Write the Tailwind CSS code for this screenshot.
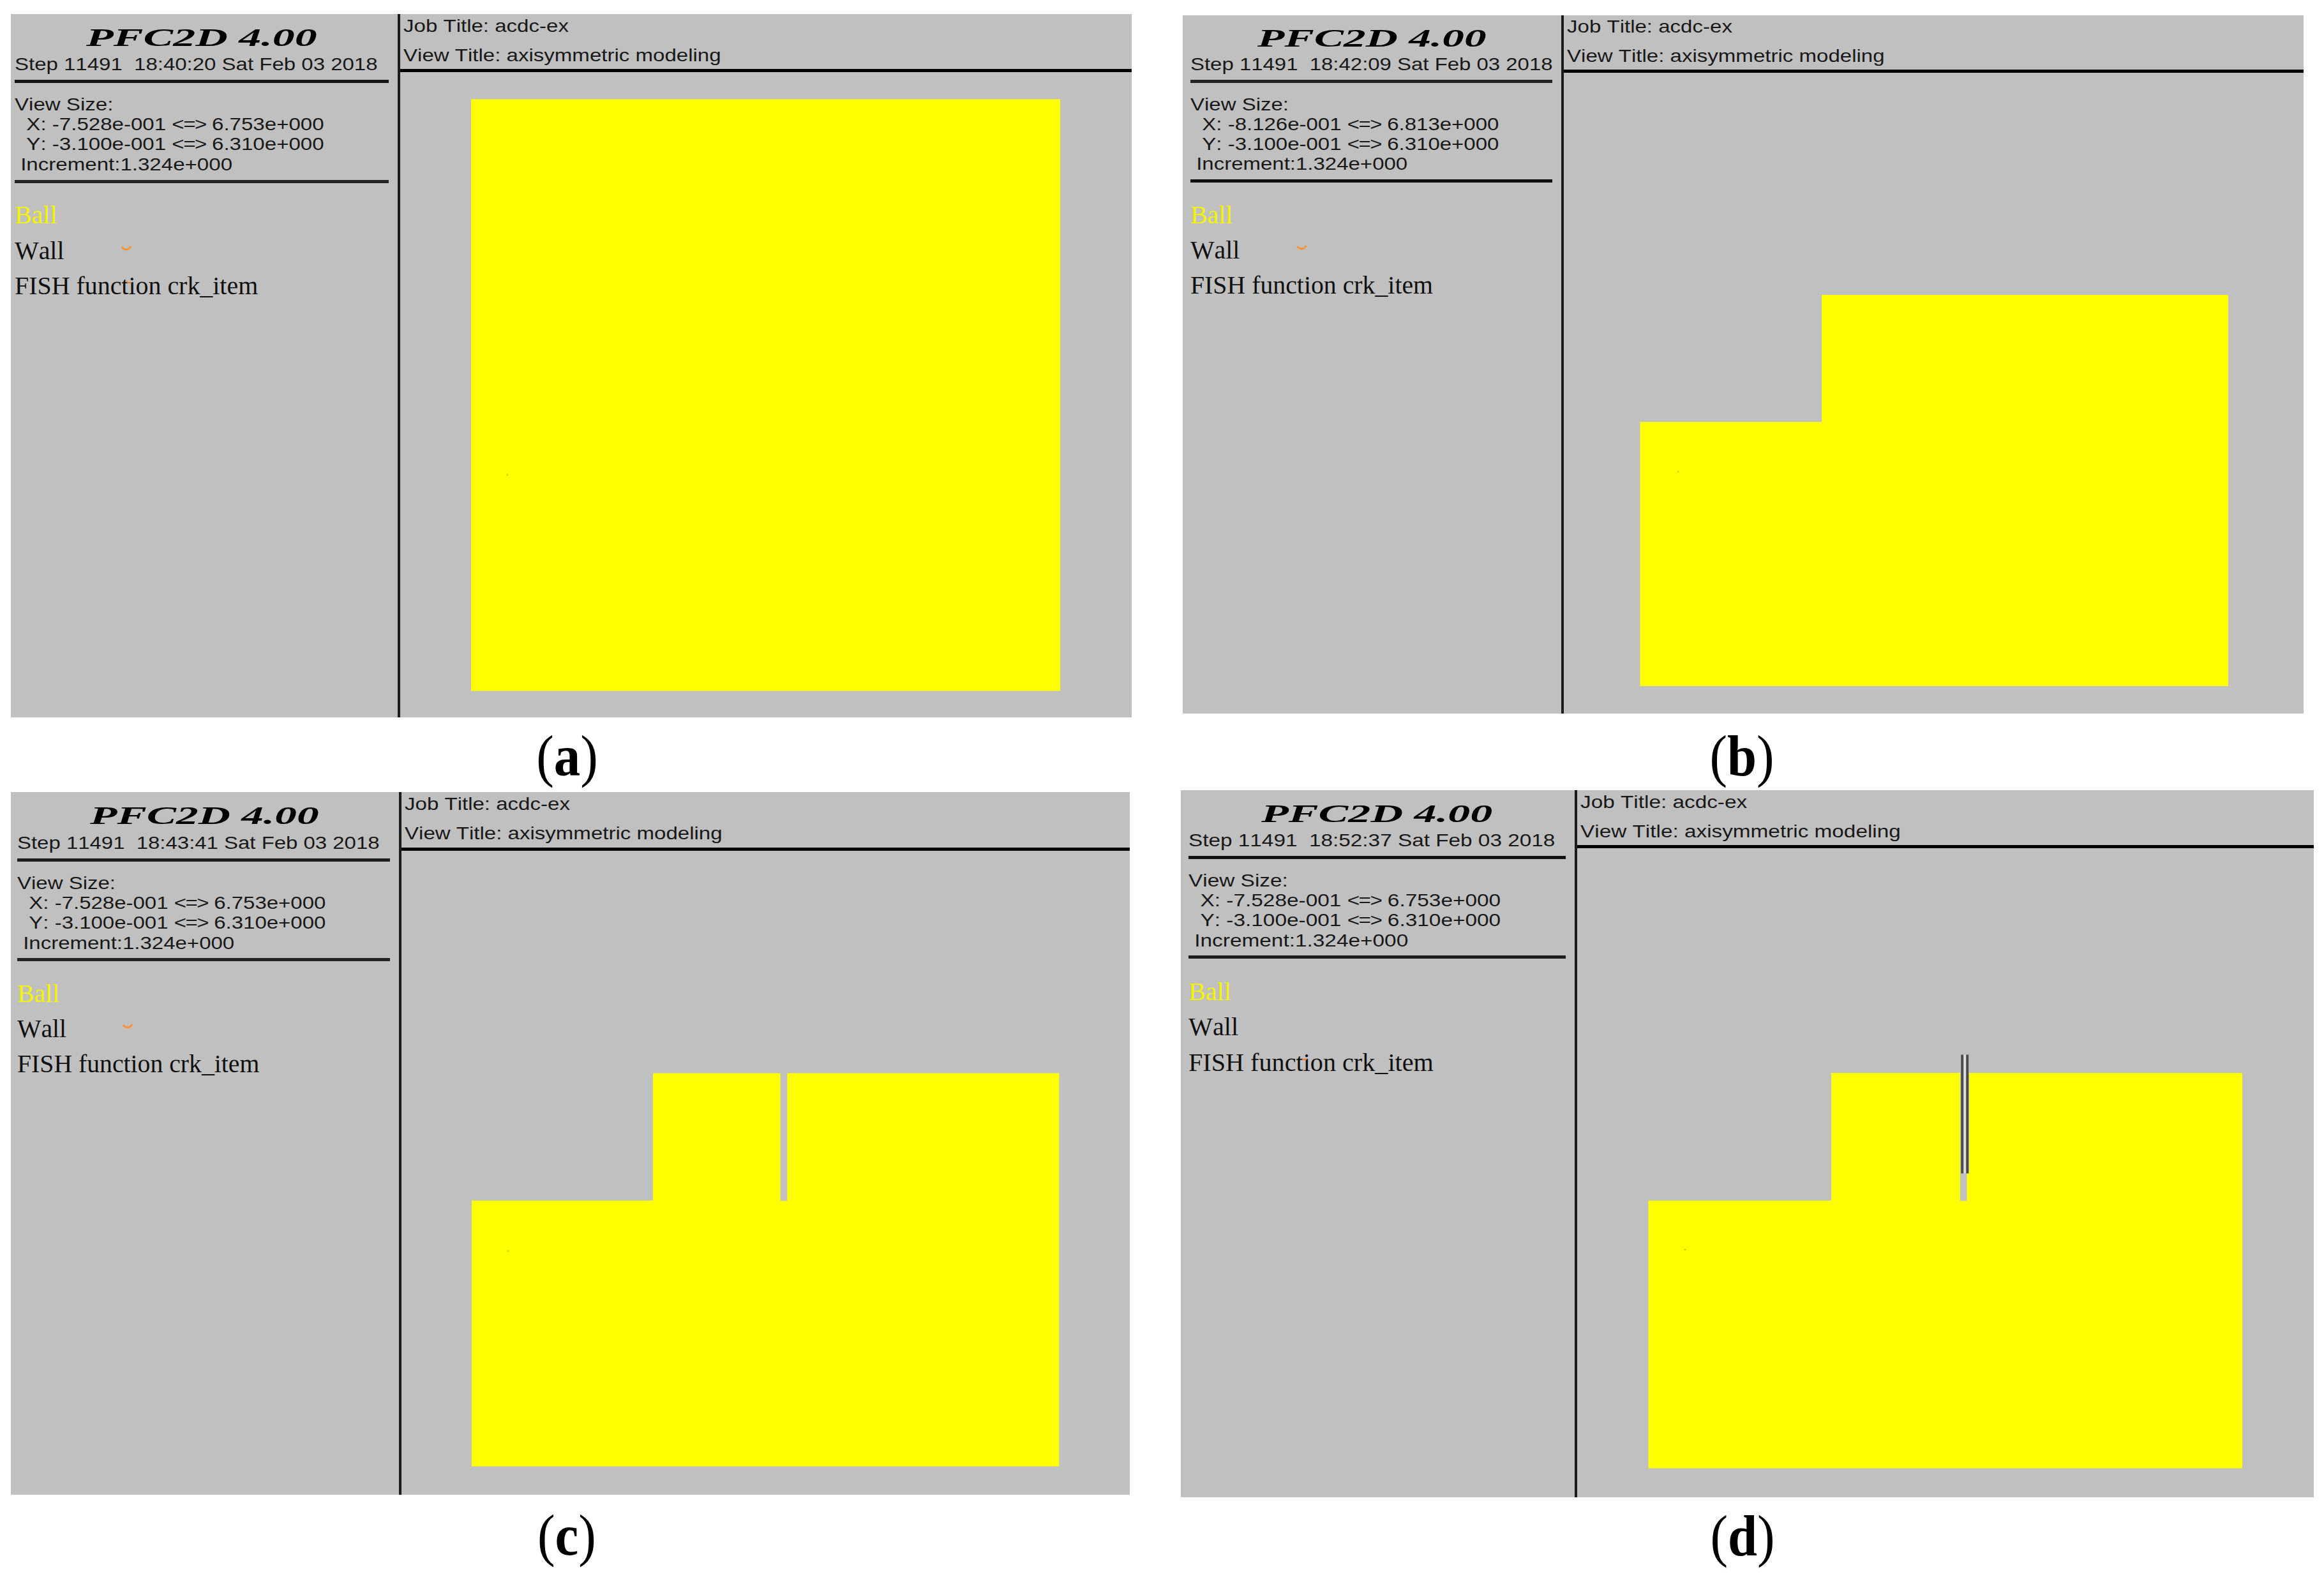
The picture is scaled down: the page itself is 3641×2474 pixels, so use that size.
<!DOCTYPE html>
<html lang="en">
<head>
    <meta charset="UTF-8">
    <meta name="viewport" content="width=device-width, initial-scale=1.0">
    <title>PFC2D 4.00 - axisymmetric modeling</title>
    <script src="https://cdn.jsdelivr.net/npm/@tailwindcss/browser@4"></script>
</head>
<body class="bg-white w-[3641px] h-[2474px] overflow-hidden flex gap-[77px] pl-[17px] text-[#181818] font-['Liberation_Sans',sans-serif] text-[28px] [font-kerning:none]">

<!-- left column -->
<div class="w-[1756px] flex-none">

    <!-- (a) -->
    <section class="mt-[22px] w-[1756px] h-[1102px] flex bg-[#c0c0c0]">
        <aside class="w-[610px] flex-none border-r-4 border-[#1c1c1c] pl-[6px] pt-[15px]">
            <h1 class="ml-[112px] w-max origin-left scale-x-[1.75] font-['Liberation_Serif',serif] font-bold italic text-[40px] leading-[44px] text-black">PFC2D 4.00</h1>
            <p class="mt-[4px] w-max origin-left scale-x-[1.178] leading-[32px] whitespace-pre">Step 11491  18:40:20 Sat Feb 03 2018</p>
            <div class="mt-[8px] w-[586px] h-[5px] bg-[#141414]"></div>
            <div class="mt-[18px] w-max origin-left scale-x-[1.181] leading-[31.2px]">
                <p>View Size:</p>
                <p class="whitespace-pre">  X: -7.528e-001 <span class="tracking-[-0.045em]">&lt;=&gt;</span> 6.753e+000</p>
                <p class="whitespace-pre">  Y: -3.100e-001 <span class="tracking-[-0.045em]">&lt;=&gt;</span> 6.310e+000</p>
                <p class="whitespace-pre"> Increment:1.324e+000</p>
            </div>
            <div class="mt-[9px] w-[586px] h-[5px] bg-[#242424]"></div>
            <div class="mt-[22px] w-max origin-left scale-x-[1.023] font-['Liberation_Serif',serif] text-[39px] leading-[55.7px] text-[#101010]">
                <p class="text-[#f4f400]">Ball</p>
                <p class="relative">Wall<svg class="absolute left-[163px] top-[20px] w-[16px] h-[8px]" viewBox="0 0 16 8" fill="none" stroke="#ff9238" stroke-width="3"><path d="M1 2 Q4 6 8 6 Q12 6 15 1"/></svg></p>
                <p class="relative">FISH function crk_item<svg class="absolute left-[170px] top-[20px] w-[10px] h-[5px]" viewBox="0 0 10 5" fill="none" stroke="#f08030" stroke-width="2"><path d="M1 1 Q5 5 9 2"/></svg></p>
            </div>
        </aside>
        <main class="flex-1 flex flex-col">
            <header class="h-[91px] border-b-5 border-black pl-[5px]">
                <p class="w-max origin-left scale-x-[1.18] leading-[37px]">Job Title: acdc-ex</p>
                <p class="mt-[9px] w-max origin-left scale-x-[1.18] leading-[37px]">View Title: axisymmetric modeling</p>
            </header>
            <svg class="w-[1146px] h-[1011px]" viewBox="627 113 1146 1011">
                <path d="M738 155.5H1661V1082.5H738Z" fill="#ffff00"/>
                <circle cx="795" cy="744" r="1.5" fill="#d2d200"/>
            </svg>
        </main>
    </section>
    <p class="w-[1742px] h-[117px] pt-[2px] leading-[117px] text-center font-['Liberation_Serif',serif] text-[90px] text-black"><span class="inline-block scale-x-[0.92]">(<b>a</b>)</span></p>

    <!-- (c) -->
    <section class="w-[1753px] h-[1101px] flex bg-[#c0c0c0]">
        <aside class="w-[612px] flex-none border-r-4 border-[#1c1c1c] pl-[10px] pt-[15px]">
            <h1 class="ml-[114px] w-max origin-left scale-x-[1.735] font-['Liberation_Serif',serif] font-bold italic text-[40px] leading-[44px] text-black">PFC2D 4.00</h1>
            <p class="mt-[5px] w-max origin-left scale-x-[1.176] leading-[32px] whitespace-pre">Step 11491  18:43:41 Sat Feb 03 2018</p>
            <div class="mt-[8px] w-[584px] h-[5px] bg-[#1e1e1e]"></div>
            <div class="mt-[18px] w-max origin-left scale-x-[1.178] leading-[31.2px]">
                <p>View Size:</p>
                <p class="whitespace-pre">  X: -7.528e-001 <span class="tracking-[-0.045em]">&lt;=&gt;</span> 6.753e+000</p>
                <p class="whitespace-pre">  Y: -3.100e-001 <span class="tracking-[-0.045em]">&lt;=&gt;</span> 6.310e+000</p>
                <p class="whitespace-pre"> Increment:1.324e+000</p>
            </div>
            <div class="mt-[8px] w-[584px] h-[5px] bg-[#242424]"></div>
            <div class="mt-[23px] w-max origin-left scale-x-[1.018] font-['Liberation_Serif',serif] text-[39px] leading-[55px] text-[#101010]">
                <p class="text-[#f4f400]">Ball</p>
                <p class="relative">Wall<svg class="absolute left-[162px] top-[20px] w-[16px] h-[8px]" viewBox="0 0 16 8" fill="none" stroke="#ff9238" stroke-width="3"><path d="M1 2 Q4 6 8 6 Q12 6 15 1"/></svg></p>
                <p>FISH function crk_item</p>
            </div>
        </aside>
        <main class="flex-1 flex flex-col">
            <header class="h-[92px] border-b-5 border-black pl-[5px]">
                <p class="w-max origin-left scale-x-[1.18] leading-[37px]">Job Title: acdc-ex</p>
                <p class="mt-[9px] w-max origin-left scale-x-[1.18] leading-[37px]">View Title: axisymmetric modeling</p>
            </header>
            <svg class="w-[1141px] h-[1009px]" viewBox="629 1333 1141 1009">
                <!-- stepped block with an open slot -->
                <path d="M739 1881H1023V1681.5H1222.7V1881.5H1233.3V1681.5H1659.3V2297.5H739Z" fill="#ffff00"/>
                <circle cx="796" cy="1960" r="1.5" fill="#d2d200"/>
            </svg>
        </main>
    </section>
    <p class="w-[1742px] h-[124px] pt-[4px] leading-[120px] text-center font-['Liberation_Serif',serif] text-[90px] text-black"><span class="inline-block scale-x-[0.92]">(<b>c</b>)</span></p>
</div>

<!-- right column -->
<div class="w-[1775px] flex-none">

    <!-- (b) -->
    <section class="mt-[24px] ml-[3px] w-[1756px] h-[1094px] flex bg-[#c0c0c0]">
        <aside class="w-[597px] flex-none border-r-4 border-[#1c1c1c] pl-[12px] pt-[14px]">
            <h1 class="ml-[105px] w-max origin-left scale-x-[1.735] font-['Liberation_Serif',serif] font-bold italic text-[40px] leading-[44px] text-black">PFC2D 4.00</h1>
            <p class="mt-[3px] w-max origin-left scale-x-[1.176] leading-[32px] whitespace-pre">Step 11491  18:42:09 Sat Feb 03 2018</p>
            <div class="mt-[8px] w-[567px] h-[5px] bg-[#242424]"></div>
            <div class="mt-[18px] w-max origin-left scale-x-[1.178] leading-[31.1px]">
                <p>View Size:</p>
                <p class="whitespace-pre">  X: -8.126e-001 <span class="tracking-[-0.045em]">&lt;=&gt;</span> 6.813e+000</p>
                <p class="whitespace-pre">  Y: -3.100e-001 <span class="tracking-[-0.045em]">&lt;=&gt;</span> 6.310e+000</p>
                <p class="whitespace-pre"> Increment:1.324e+000</p>
            </div>
            <div class="mt-[8.6px] w-[567px] h-[5px] bg-[#101010]"></div>
            <div class="mt-[23px] w-max origin-left scale-x-[1.02] font-['Liberation_Serif',serif] text-[39px] leading-[55px] text-[#101010]">
                <p class="text-[#f4f400]">Ball</p>
                <p class="relative">Wall<svg class="absolute left-[163px] top-[20px] w-[16px] h-[8px]" viewBox="0 0 16 8" fill="none" stroke="#ff9238" stroke-width="3"><path d="M1 2 Q4 6 8 6 Q12 6 15 1"/></svg></p>
                <p>FISH function crk_item</p>
            </div>
        </aside>
        <main class="flex-1 flex flex-col">
            <header class="h-[90px] border-b-5 border-black pl-[5px]">
                <p class="w-max origin-left scale-x-[1.18] leading-[36px]">Job Title: acdc-ex</p>
                <p class="mt-[10px] w-max origin-left scale-x-[1.18] leading-[36px]">View Title: axisymmetric modeling</p>
            </header>
            <svg class="w-[1159px] h-[1004px]" viewBox="2450 114 1159 1004">
                <path d="M2569.5 661H2854V462H3491V1075H2569.5Z" fill="#ffff00"/>
                <circle cx="2629" cy="739" r="1.5" fill="#d2d200"/>
            </svg>
        </main>
    </section>
    <p class="w-[1759px] h-[120px] pt-[8px] leading-[117px] text-center font-['Liberation_Serif',serif] text-[90px] text-black"><span class="inline-block scale-x-[0.92]">(<b>b</b>)</span></p>

    <!-- (d) -->
    <section class="w-[1775px] h-[1108px] flex bg-[#c0c0c0]">
        <aside class="w-[621px] flex-none border-r-4 border-[#1c1c1c] pl-[12px] pt-[15px]">
            <h1 class="ml-[114px] w-max origin-left scale-x-[1.753] font-['Liberation_Serif',serif] font-bold italic text-[40px] leading-[44px] text-black">PFC2D 4.00</h1>
            <p class="mt-[4px] w-max origin-left scale-x-[1.19] leading-[32px] whitespace-pre">Step 11491  18:52:37 Sat Feb 03 2018</p>
            <div class="mt-[8px] w-[591px] h-[5px] bg-[#101010]"></div>
            <div class="mt-[18px] w-max origin-left scale-x-[1.192] leading-[31.2px]">
                <p>View Size:</p>
                <p class="whitespace-pre">  X: -7.528e-001 <span class="tracking-[-0.045em]">&lt;=&gt;</span> 6.753e+000</p>
                <p class="whitespace-pre">  Y: -3.100e-001 <span class="tracking-[-0.045em]">&lt;=&gt;</span> 6.310e+000</p>
                <p class="whitespace-pre"> Increment:1.324e+000</p>
            </div>
            <div class="mt-[8.2px] w-[591px] h-[5px] bg-[#1e1e1e]"></div>
            <div class="mt-[24px] w-max origin-left scale-x-[1.03] font-['Liberation_Serif',serif] text-[39px] leading-[55.3px] text-[#101010]">
                <p class="text-[#f4f400]">Ball</p>
                <p>Wall</p>
                <p class="relative">FISH function crk_item<svg class="absolute left-[171px] top-[20px] w-[10px] h-[5px]" viewBox="0 0 10 5" fill="none" stroke="#f08030" stroke-width="2"><path d="M1 1 Q5 5 9 2"/></svg></p>
            </div>
        </aside>
        <main class="flex-1 flex flex-col">
            <header class="h-[91px] border-b-5 border-black pl-[5px]">
                <p class="w-max origin-left scale-x-[1.19] leading-[37px]">Job Title: acdc-ex</p>
                <p class="mt-[9px] w-max origin-left scale-x-[1.19] leading-[37px]">View Title: axisymmetric modeling</p>
            </header>
            <svg class="w-[1154px] h-[1017px]" viewBox="2471 1329 1154 1017">
                <path d="M2582.5 1881H2869V1681H3071V1881.5H3081.5V1681H3513V2300.5H2582.5Z" fill="#ffff00"/>
                <!-- pair of walls inside the slot -->
                <path d="M3071 1652.5H3085V1838.5H3071Z" fill="#c0c0c0"/>
                <path d="M3076 1652.5H3080.5V1838.5H3076Z" fill="#dedede"/>
                <path d="M3072.3 1652.5H3076.2V1838.5H3072.3ZM3080.3 1652.5H3084.2V1838.5H3080.3Z" fill="#4a4a4a"/>
                <circle cx="2640" cy="1958" r="1.5" fill="#d2d200"/>
            </svg>
        </main>
    </section>
    <p class="w-[1761px] h-[118px] pt-[4px] leading-[114px] text-center font-['Liberation_Serif',serif] text-[90px] text-black"><span class="inline-block scale-x-[0.92]">(<b>d</b>)</span></p>
</div>

</body>
</html>
